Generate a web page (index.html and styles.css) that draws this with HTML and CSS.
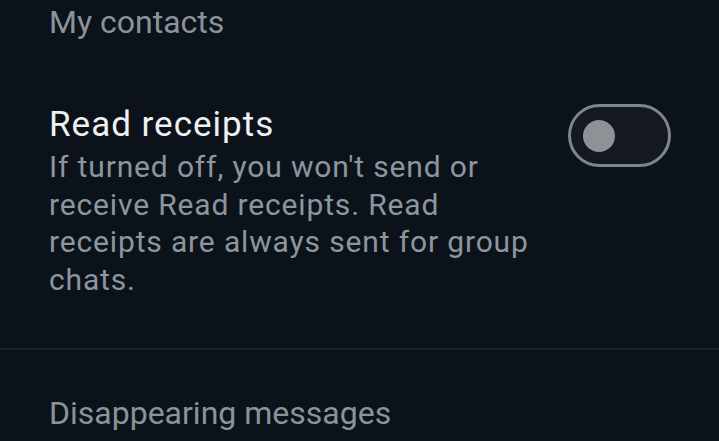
FILE: index.html
```html
<!DOCTYPE html>
<html lang="en">
<head>
    <meta charset="UTF-8">
    <title>Privacy</title>
    <link rel="stylesheet" href="styles.css">
</head>
<body>
    <div class="settings">
        <div class="option-value">My contacts</div>

        <div class="setting-row">
            <div class="setting-text">
                <p class="setting-title">Read receipts</p>
                <p class="setting-desc">If turned off, you won't send or receive Read receipts. Read receipts are always sent for group chats.</p>
            </div>
            <div class="toggle">
                <span class="toggle-knob"></span>
            </div>
        </div>

        <div class="divider"></div>

        <div class="section-title">Disappearing messages</div>
    </div>
</body>
</html>
```

FILE: styles.css
```css
body {
    margin: 0;
    background: #0c121a;
    font-family: Roboto, "Noto Sans", sans-serif;
}
.settings {
    height: 441px;
    overflow: hidden;
}
.option-value {
    padding: 3px 0 0 49px;
    font-size: 32px;
    line-height: 38px;
    color: #8a939c;
}
.setting-row {
    display: flex;
    justify-content: space-between;
    align-items: flex-start;
    padding: 64px 48px 0 49px;
}
.setting-text {
    width: 495px;
}
.setting-title {
    margin: 0;
    font-size: 35px;
    line-height: 40px;
    letter-spacing: 1px;
    color: #eef0f2;
}
.setting-desc {
    margin: 3px 0 0;
    font-size: 30px;
    line-height: 37.6px;
    letter-spacing: 0.85px;
    color: #8d959e;
}
.toggle {
    margin-top: -1px;
    width: 85px;
    height: 57px;
    border: 3px solid #7f858c;
    border-radius: 32px;
    background: #141820;
    display: flex;
    align-items: center;
    padding-left: 12px;
    box-sizing: content-box;
}
.toggle-knob {
    width: 32px;
    height: 32px;
    border-radius: 50%;
    background: #8e9297;
}
.divider {
    margin-top: 50px;
    height: 2px;
    background: #1d232a;
}
.section-title {
    padding: 44px 0 0 49px;
    font-size: 32px;
    color: #8a939c;
}
```
